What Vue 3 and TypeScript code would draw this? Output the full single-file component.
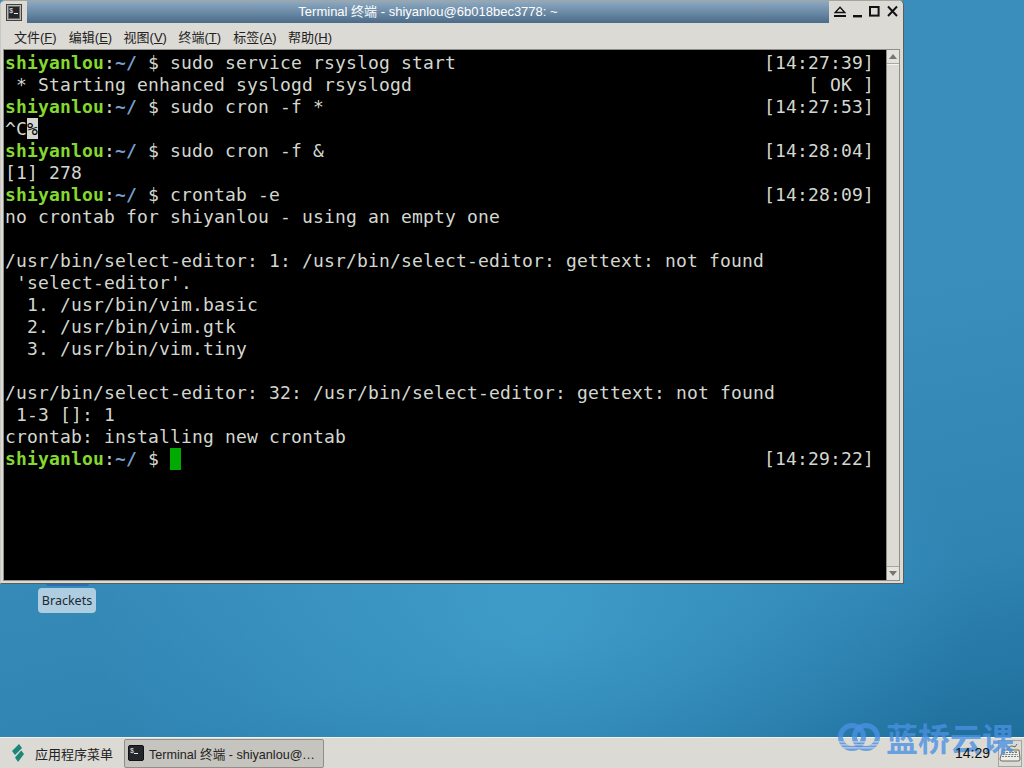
<script setup lang="ts">
type Seg = { t: string; c?: string }
const prompt = (rest: string): Seg[] => [
  { t: 'shiyanlou', c: 'g' },
  { t: ':' },
  { t: '~/', c: 'b' },
  { t: ' $ ' + rest },
]
const stamp = (cmd: string, time: string) => {
  const used = 15 + cmd.length
  return cmd + ' '.repeat(Math.max(0, 69 - used)) + '[' + time + ']'
}
const lines: Seg[][] = [
  prompt(stamp('sudo service rsyslog start', '14:27:39')),
  [{ t: ' * Starting enhanced syslogd rsyslogd' + ' '.repeat(36) + '[ OK ]' }],
  prompt(stamp('sudo cron -f *', '14:27:53')),
  [{ t: '^C' }, { t: '%', c: 'inv' }],
  prompt(stamp('sudo cron -f &', '14:28:04')),
  [{ t: '[1] 278' }],
  prompt(stamp('crontab -e', '14:28:09')),
  [{ t: 'no crontab for shiyanlou - using an empty one' }],
  [{ t: ' ' }],
  [{ t: '/usr/bin/select-editor: 1: /usr/bin/select-editor: gettext: not found' }],
  [{ t: " 'select-editor'." }],
  [{ t: '  1. /usr/bin/vim.basic' }],
  [{ t: '  2. /usr/bin/vim.gtk' }],
  [{ t: '  3. /usr/bin/vim.tiny' }],
  [{ t: ' ' }],
  [{ t: '/usr/bin/select-editor: 32: /usr/bin/select-editor: gettext: not found' }],
  [{ t: ' 1-3 []: 1' }],
  [{ t: 'crontab: installing new crontab' }],
  [
    { t: 'shiyanlou', c: 'g' },
    { t: ':' },
    { t: '~/', c: 'b' },
    { t: ' $ ' },
    { t: ' ', c: 'cur' },
    { t: ' '.repeat(53) + '[14:29:22]' },
  ],
]
const menus = [
  ['文件(', 'F', ')'],
  ['编辑(', 'E', ')'],
  ['视图(', 'V', ')'],
  ['终端(', 'T', ')'],
  ['标签(', 'A', ')'],
  ['帮助(', 'H', ')'],
]
</script>

<template>
  <div class="desktop">
    <div class="canvas">
      <div class="launcher-glow"></div>
      <div class="launcher">Brackets</div>

      <section class="window">
        <header class="titlebar">
          <div class="win-icon">
            <svg width="16" height="17" viewBox="0 0 16 17">
              <rect x="0.5" y="0.5" width="15" height="16" fill="#b9b8b2" stroke="#44423e" />
              <rect x="2.5" y="2.5" width="11" height="12" fill="#23262a" stroke="#6b6a66" />
              <text x="3" y="8.5" font-size="7" fill="#f0f0f0" font-family="Liberation Mono, monospace">$</text>
              <rect x="8" y="9" width="4" height="1" fill="#f0f0f0" />
            </svg>
          </div>
          <div class="title">Terminal 终端 - shiyanlou@6b018bec3778: ~</div>
          <div class="win-buttons">
            <svg width="14" height="14" viewBox="0 0 14 14">
              <path d="M7 2.2 L11.8 7.5 H2.2 Z" fill="none" stroke="#111" stroke-width="1.4" />
              <rect x="1" y="10" width="12" height="2" fill="#111" />
            </svg>
            <svg width="14" height="14" viewBox="0 0 14 14">
              <rect x="2" y="10" width="9" height="2.4" fill="#111" />
            </svg>
            <svg width="14" height="14" viewBox="0 0 14 14">
              <rect x="2" y="2" width="8.6" height="8.6" fill="none" stroke="#111" stroke-width="2" />
            </svg>
            <svg width="14" height="14" viewBox="0 0 14 14">
              <path d="M2 1.5 L11 11 M11 1.5 L2 11" stroke="#111" stroke-width="1.9" fill="none" />
            </svg>
          </div>
        </header>

        <nav class="menubar">
          <span v-for="m in menus" :key="m[1]" class="menu">{{ m[0] }}<u>{{ m[1] }}</u>{{ m[2] }}</span>
        </nav>

        <div class="term-row">
          <div class="terminal">
            <div v-for="(line, i) in lines" :key="i" class="line"><span
              v-for="(seg, j) in line" :key="j" :class="seg.c">{{ seg.t }}</span></div>
          </div>
          <div class="scrollbar">
            <div class="arrow"><span class="tri up"></span></div>
            <div class="track"></div>
            <div class="arrow"><span class="tri down"></span></div>
          </div>
        </div>
      </section>
    </div>

    <footer class="panel">
      <div class="appmenu">
        <svg width="12" height="18" viewBox="0 0 12 18">
          <path d="M7 0 L10 4 L3 11 L0 7 Z M9.2 6.5 L12 10 L6 18 L3 13.5 Z" fill="#1c8577" />
        </svg>
        <span>应用程序菜单</span>
      </div>
      <div class="task">
        <svg width="16" height="16" viewBox="0 0 16 16">
          <rect x="0.5" y="0.5" width="15" height="15" rx="1.5" fill="#23262a" stroke="#111" />
          <text x="2" y="7.5" font-size="6.5" fill="#eee" font-family="Liberation Mono, monospace">$</text>
          <rect x="6" y="8" width="4" height="1" fill="#eee" />
        </svg>
        <span class="task-label">Terminal 终端 - shiyanlou@<span class="dots">⋯</span></span>
      </div>
      <div class="spacer"></div>
      <div class="clock">14:29</div>
      <div class="tray">
        <svg width="22" height="20" viewBox="0 0 22 20">
          <path d="M8 7 Q11 1 16 4 L18 1" fill="none" stroke="#666" />
          <path d="M3.5 7 H20 L21 16 Q21 18 19 18 H3 Q1 18 1 16 Z" fill="#efefea" stroke="#666" />
          <path d="M4 9.5 H18 M3.5 11.5 H19 M3 13.5 H19.5" stroke="#777" stroke-dasharray="2 1" />
          <rect x="15" y="8" width="3" height="1" fill="#c8b23c" />
        </svg>
      </div>
    </footer>

    <div class="watermark">
      <svg width="42" height="30" viewBox="0 0 42 30">
        <defs>
          <mask id="stripes">
            <rect x="0" y="0" width="42" height="17" fill="#fff" />
            <rect x="0" y="17" width="42" height="2.4" fill="#fff" />
            <rect x="0" y="20.4" width="42" height="2" fill="#fff" />
            <rect x="0" y="23.4" width="42" height="2" fill="#fff" />
            <rect x="0" y="26.4" width="42" height="3.6" fill="#fff" />
          </mask>
        </defs>
        <g mask="url(#stripes)" fill="none" stroke="currentColor">
          <circle cx="14" cy="15" r="11.5" stroke-width="5" />
          <circle cx="28" cy="15" r="11.5" stroke-width="5" />
        </g>
      </svg>
      <span>蓝桥云课</span>
    </div>
  </div>
</template>

<style scoped>
.desktop {
  position: relative;
  width: 1024px;
  height: 768px;
  display: flex;
  flex-direction: column;
  overflow: hidden;
  font-family: "Noto Sans", "Noto Sans CJK SC", sans-serif;
}
.canvas {
  position: relative;
  height: 737px;
  background:
    radial-gradient(ellipse 440px 300px at 530px 610px, rgba(72, 170, 215, 0.6) 0%, rgba(72, 170, 215, 0.28) 55%, rgba(72, 170, 215, 0) 100%),
    linear-gradient(168deg, #3c8fbb 0%, #3a8ebb 50%, #2f84b2 80%, #1f6f9c 100%);
}
.window {
  position: absolute;
  left: 0;
  top: 0;
  width: 904px;
  height: 584px;
  background: #dcdad5;
  border: 1px solid #5d5c57;
  border-top-color: #a5a5a0;
  border-left-color: #c8c7c1;
  border-radius: 5px 5px 0 0;
  box-sizing: border-box;
  display: flex;
  flex-direction: column;
}
.titlebar {
  height: 22px;
  display: flex;
  align-items: center;
  background: #dcdad5;
  border-radius: 5px 5px 0 0;
  flex: none;
}
.win-icon {
  width: 26px;
  height: 22px;
  padding: 3px 0 0 5px;
  box-sizing: border-box;
  flex: none;
}
.win-icon svg {
  display: block;
}
.title {
  flex: none;
  width: 802px;
  height: 22px;
  line-height: 22px;
  text-align: center;
  color: #fff;
  font-family: "Liberation Sans", "Noto Sans CJK SC", sans-serif;
  font-size: 13px;
  background: linear-gradient(180deg, #8faac2 0%, #6f8ea9 45%, #4a6b89 100%);
}
.win-buttons {
  flex: 1;
  display: flex;
  gap: 3.5px;
  padding: 0 0 0 4px;
}
.win-buttons svg {
  display: block;
  flex: none;
}
.menubar {
  height: 26px;
  display: flex;
  align-items: center;
  padding-left: 13px;
  gap: 14.8px;
  flex: none;
  font-family: "Liberation Sans", "Noto Sans CJK SC", sans-serif;
  font-size: 13px;
  color: #222;
}
.menu {
  width: 40px;
  white-space: nowrap;
  flex: none;
}
.menu u {
  text-decoration: underline;
}
.term-row {
  flex: 1;
  display: flex;
  padding: 0 3px 2px 2px;
  min-height: 0;
}
.terminal {
  flex: 1;
  min-width: 0;
  background: #000;
  border: 1px solid #8f8e88;
  border-right: none;
  padding: 2px 0 0 1px;
  font-family: "DejaVu Sans Mono", monospace;
  font-size: 18px;
  letter-spacing: 0.164px;
  color: #d3d7cf;
  overflow: hidden;
}
.line {
  height: 22px;
  line-height: 22px;
  white-space: pre;
}
.g {
  color: #84d92f;
  font-weight: bold;
}
.b {
  color: #729fcf;
  font-weight: bold;
}
.inv {
  background: #d3d7cf;
  color: #000;
}
.cur {
  background: #00aa00;
  display: inline-block;
  width: 11px;
  height: 22px;
  vertical-align: top;
}
.scrollbar {
  width: 14px;
  box-sizing: border-box;
  display: flex;
  flex-direction: column;
  background: #a9a7a1;
  border: 1px solid #8f8e88;
  flex: none;
  gap: 1px;
}
.arrow {
  height: 13px;
  background: #e4e2dd;
  display: flex;
  align-items: center;
  justify-content: center;
  flex: none;
}
.tri {
  width: 0;
  height: 0;
  border-left: 4px solid transparent;
  border-right: 4px solid transparent;
}
.tri.up {
  border-bottom: 5px solid #77756f;
}
.tri.down {
  border-top: 5px solid #77756f;
}
.track {
  flex: 1;
  background: #dcdad5;
  border-top: 1px solid #f4f3f0;
}
.launcher {
  position: absolute;
  left: 38px;
  top: 588px;
  width: 58px;
  height: 25px;
  border-radius: 4px;
  background: #afcde0;
  color: #1c2a33;
  font-size: 12.5px;
  line-height: 25px;
  text-align: center;
}
.launcher-glow {
  position: absolute;
  left: 46px;
  top: 583px;
  width: 43px;
  height: 3px;
  border-radius: 0 0 6px 6px;
  background: #2a6cb5;
}
.watermark {
  position: absolute;
  left: 838px;
  top: 722px;
  height: 30px;
  display: flex;
  align-items: center;
  gap: 6px;
  color: rgba(74, 144, 226, 0.8);
  font-family: "Noto Sans CJK SC", sans-serif;
  font-weight: 700;
  font-size: 32px;
  line-height: 30px;
  z-index: 2;
  pointer-events: none;
}
.watermark svg {
  flex: none;
}
.panel {
  height: 31px;
  background: #dcdad5;
  border-top: 1px solid #f2f1ee;
  box-sizing: border-box;
  display: flex;
  align-items: center;
  color: #222;
  font-family: "Liberation Sans", "Noto Sans CJK SC", sans-serif;
  font-size: 13px;
  flex: none;
}
.appmenu {
  width: 124px;
  flex: none;
  display: flex;
  align-items: center;
  gap: 11px;
  padding-left: 12px;
  box-sizing: border-box;
}
.task {
  width: 200px;
  height: 29px;
  box-sizing: border-box;
  border: 1px solid #8f8e88;
  border-radius: 2px;
  background: #c6c4be;
  display: flex;
  align-items: center;
  gap: 5px;
  padding-left: 3px;
  flex: none;
  font-size: 12.6px;
}
.task-label {
  white-space: nowrap;
}
.dots {
  font-family: "Noto Sans CJK SC", sans-serif;
  font-size: 11px;
}
.spacer {
  flex: 1;
}
.clock {
  position: relative;
  z-index: 3;
  font-size: 14px;
  color: #111;
  margin-right: 8px;
}
.tray {
  width: 24px;
  height: 27px;
  margin-right: 2px;
  border: 1px solid #a5a49e;
  box-sizing: border-box;
  display: flex;
  align-items: center;
  justify-content: center;
}
</style>
